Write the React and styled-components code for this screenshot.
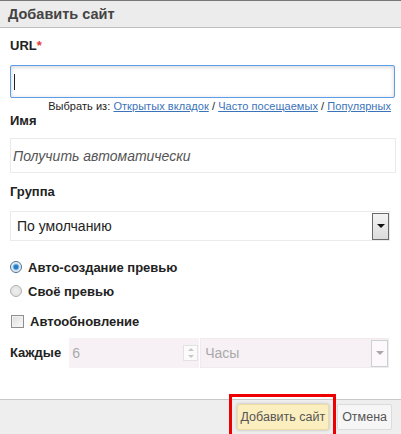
import React from "react";
import styled, { createGlobalStyle } from "styled-components";

const Global = createGlobalStyle`
  html, body { margin: 0; padding: 0; background: #fff; }
  body { font-family: "Liberation Sans", Arial, sans-serif; width: 401px; height: 434px; overflow: hidden; }
  * { box-sizing: border-box; }
`;

const Dialog = styled.div`
  width: 401px;
  height: 434px;
  display: flex;
  flex-direction: column;
  background: #fff;
`;

const Header = styled.div`
  height: 28px;
  flex: none;
  background: #ececec;
  border-top: 1px solid #777;
  border-bottom: 1px solid #bdbdbd;
  display: flex;
  align-items: center;
  padding: 0 8px;
  font-weight: bold;
  font-size: 14.5px;
  color: #444;
`;

const Body = styled.div`
  flex: 1;
  padding: 10px 5px 0 10px;
  display: flex;
  flex-direction: column;
`;

const Label = styled.div`
  font-weight: bold;
  font-size: 13px;
  color: #222;
  line-height: 16px;
  margin-top: ${(p) => p.$mt || 0}px;
  margin-bottom: ${(p) => p.$mb || 0}px;
  margin-right: ${(p) => p.$mr || 0}px;
`;

const Star = styled.span`
  color: #e23b3b;
`;

const UrlInput = styled.div`
  width: 385px;
  height: 33px;
  flex: none;
  border: 1px solid #5b9de6;
  border-radius: 2px;
  box-shadow: inset 0 1px 4px rgba(0, 0, 0, 0.18);
  display: flex;
  align-items: center;
  padding-left: 3px;
`;

const Caret = styled.div`
  width: 1px;
  height: 16px;
  background: #222;
`;

const Helper = styled.div`
  font-size: 11px;
  color: #222;
  text-align: right;
  padding-right: 5px;
  margin-top: 2px;
  line-height: 13px;
  letter-spacing: 0.05px;
`;

const Link = styled.a`
  color: #3b73b9;
  text-decoration: underline;
`;

const TextInput = styled.div`
  width: 386px;
  height: 35px;
  flex: none;
  border: 1px solid #eaeaea;
  display: flex;
  align-items: center;
  padding-left: 2px;
  font-size: 14px;
  font-style: ${(p) => (p.$placeholder ? "italic" : "normal")};
  color: ${(p) => (p.$placeholder ? "#555" : "#222")};
`;

const Select = styled.div`
  width: ${(p) => p.$w}px;
  height: 30px;
  flex: none;
  border: 1px solid ${(p) => (p.$disabled ? "#f0eaee" : "#eaeaea")};
  background: ${(p) => (p.$disabled ? "#f7f1f5" : "#fff")};
  display: flex;
  align-items: center;
  justify-content: space-between;
  padding: 0 0 0 ${(p) => p.$pl || 6}px;
  font-size: 14px;
  color: ${(p) => (p.$disabled ? "#a9a9a9" : "#222")};
`;

const Arrow = styled.div`
  width: 17px;
  height: 27px;
  align-self: center;
  border: 1px solid ${(p) => (p.$disabled ? "#c9d2d0" : "#6a6a6a")};
  background: ${(p) => (p.$disabled ? "#fdf8fc" : "linear-gradient(#f4f4f4, #dcdcdc)")};
  display: flex;
  align-items: center;
  justify-content: center;
  &::after {
    content: "";
    border-left: 4px solid transparent;
    border-right: 4px solid transparent;
    border-top: 4px solid ${(p) => (p.$disabled ? "#a8a8a8" : "#111")};
  }
`;

const OptionRow = styled.div`
  display: flex;
  align-items: center;
  gap: 6px;
  font-weight: bold;
  font-size: 13px;
  color: #222;
  height: 18px;
  flex: none;
  margin-top: ${(p) => p.$mt || 0}px;
`;

const Radio = styled.span`
  width: 12px;
  height: 12px;
  border-radius: 50%;
  border: 1px solid ${(p) => (p.$checked ? "#4a6f8f" : "#b2b2b2")};
  background: ${(p) =>
    p.$checked
      ? "radial-gradient(circle, #1e6fb8 0, #2d86d0 2px, #9cc4e4 3px, #e9f1f7 4px, #f3f3f3 6px)"
      : "radial-gradient(circle, #f0f0f0 0, #e2e2e2 5px)"};
  flex: none;
`;

const Checkbox = styled.span`
  width: 13px;
  height: 13px;
  border: 1px solid #8f8f8f;
  background: linear-gradient(135deg, #dcdcdc, #fbfbfb);
  box-shadow: inset 0 0 0 1px #f2f2f2;
  margin-left: 1px;
  flex: none;
`;

const EveryRow = styled.div`
  display: flex;
  align-items: center;
  margin-top: 8px;
`;

const NumberInput = styled.div`
  width: 130px;
  height: 30px;
  margin-right: 1px;
  background: #f7f1f5;
  display: flex;
  align-items: center;
  justify-content: space-between;
  padding-left: 3px;
  font-size: 14px;
  color: #a9a9a9;
`;

const Spinner = styled.div`
  width: 15px;
  height: 16px;
  margin-right: 1px;
  border: 1px solid #e2e2e2;
  background: #fbfbfb;
  display: flex;
  flex-direction: column;
  align-items: center;
  justify-content: space-around;
`;

const SpinTri = styled.span`
  border-left: 3px solid transparent;
  border-right: 3px solid transparent;
  ${(p) => (p.$up ? "border-bottom: 3px solid #c8c8c8;" : "border-top: 3px solid #c8c8c8;")}
`;

const Footer = styled.div`
  height: 35px;
  flex: none;
  background: #eeeeee;
  border-top: 1px solid #c8c8c8;
  display: flex;
  align-items: center;
  justify-content: flex-end;
  gap: 8px;
  padding-right: 9px;
`;

const Button = styled.div`
  position: relative;
  height: 26px;
  padding: 0 ${(p) => (p.$primary ? 3 : 4)}px;
  display: flex;
  align-items: center;
  font-size: 12.5px;
  color: #555;
  border-radius: 2px;
  border: 1px solid ${(p) => (p.$primary ? "#efdca0" : "#dcdcdc")};
  background: ${(p) => (p.$primary ? "#fbeebf" : "#f6f6f6")};
  ${(p) => p.$primary && `box-shadow: 0 0 3px rgba(0,0,0,.25);`}
`;

const Highlight = styled.span`
  position: absolute;
  left: -9px;
  right: -8px;
  top: -11px;
  bottom: -11px;
  border: 3px solid #ee0000;
  pointer-events: none;
`;

export default function App() {
  return (
    <>
      <Global />
      <Dialog>
        <Header>Добавить сайт</Header>
        <Body>
          <Label $mt={0} $mb={11}>
            URL<Star>*</Star>
          </Label>
          <UrlInput>
            <Caret />
          </UrlInput>
          <Helper>
            Выбрать из: <Link>Открытых вкладок</Link> / <Link>Часто посещаемых</Link> /{" "}
            <Link>Популярных</Link>
          </Helper>
          <Label $mt={0} $mb={9}>Имя</Label>
          <TextInput $placeholder>Получить автоматически</TextInput>
          <Label $mt={11} $mb={11}>Группа</Label>
          <Select $w={380}>
            По умолчанию
            <Arrow />
          </Select>
          <OptionRow $mt={17}>
            <Radio $checked />
            Авто-создание превью
          </OptionRow>
          <OptionRow $mt={6}>
            <Radio />
            Своё превью
          </OptionRow>
          <OptionRow $mt={12}>
            <Checkbox />
            Автообновление
          </OptionRow>
          <EveryRow>
            <Label $mr={8}>Каждые</Label>
            <NumberInput>
              6
              <Spinner>
                <SpinTri $up />
                <SpinTri />
              </Spinner>
            </NumberInput>
            <Select $w={189} $disabled $pl={4}>
              Часы
              <Arrow $disabled />
            </Select>
          </EveryRow>
        </Body>
        <Footer>
          <Button $primary>
            Добавить сайт
            <Highlight />
          </Button>
          <Button>Отмена</Button>
        </Footer>
      </Dialog>
    </>
  );
}
